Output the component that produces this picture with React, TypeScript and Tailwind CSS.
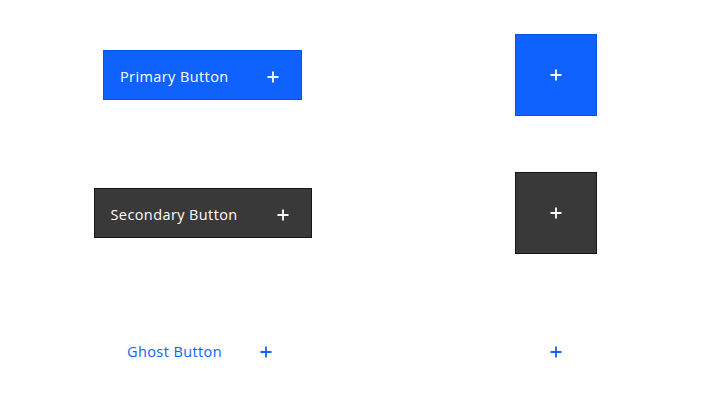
import React from "react";

function Plus({ color }: { color: string }) {
  return (
    <svg width="12" height="12" viewBox="0 0 12 12" className="shrink-0">
      <path d="M6 0.5v11M0.5 6h11" stroke={color} strokeWidth="1.8" fill="none" />
    </svg>
  );
}

export default function App() {
  return (
    <div
      className="w-[702px] h-[413px] bg-white overflow-hidden pl-[26px] pt-[6px] grid grid-cols-[353px_354px] grid-rows-[138px_138px_138px]"
      style={{ fontFamily: '"Open Sans", "Noto Sans", sans-serif' }}
    >
      <div className="flex items-center justify-center">
        <button className="w-[199px] h-[50px] bg-[#0f62fe] border border-[#0a52e6] flex items-center justify-between pl-[16px] pr-[22px] pt-[3px] text-white text-[14.5px] tracking-[0.4px]">
          <span>Primary Button</span>
          <Plus color="#ffffff" />
        </button>
      </div>
      <div className="flex items-center justify-center">
        <button className="w-[82px] h-[82px] bg-[#0f62fe] border border-[#0a52e6] flex items-center justify-center">
          <Plus color="#ffffff" />
        </button>
      </div>
      <div className="flex items-center justify-center">
        <button className="w-[218px] h-[50px] bg-[#393939] border border-[#161616] flex items-center justify-between pl-[16px] pr-[22px] pt-[3px] text-white text-[14.5px] tracking-[0.4px]">
          <span>Secondary Button</span>
          <Plus color="#ffffff" />
        </button>
      </div>
      <div className="flex items-center justify-center">
        <button className="w-[82px] h-[82px] bg-[#393939] border border-[#161616] flex items-center justify-center">
          <Plus color="#ffffff" />
        </button>
      </div>
      <div className="flex items-center justify-center">
        <button className="w-[183px] h-[48px] flex items-center justify-between pl-[16px] pr-[22px] pt-[2px] text-[#0f62fe] text-[14.5px] tracking-[0.4px]">
          <span>Ghost Button</span>
          <Plus color="#0f62fe" />
        </button>
      </div>
      <div className="flex items-center justify-center">
        <button className="w-[48px] h-[48px] flex items-center justify-center pt-[2px]">
          <Plus color="#0f62fe" />
        </button>
      </div>
    </div>
  );
}
